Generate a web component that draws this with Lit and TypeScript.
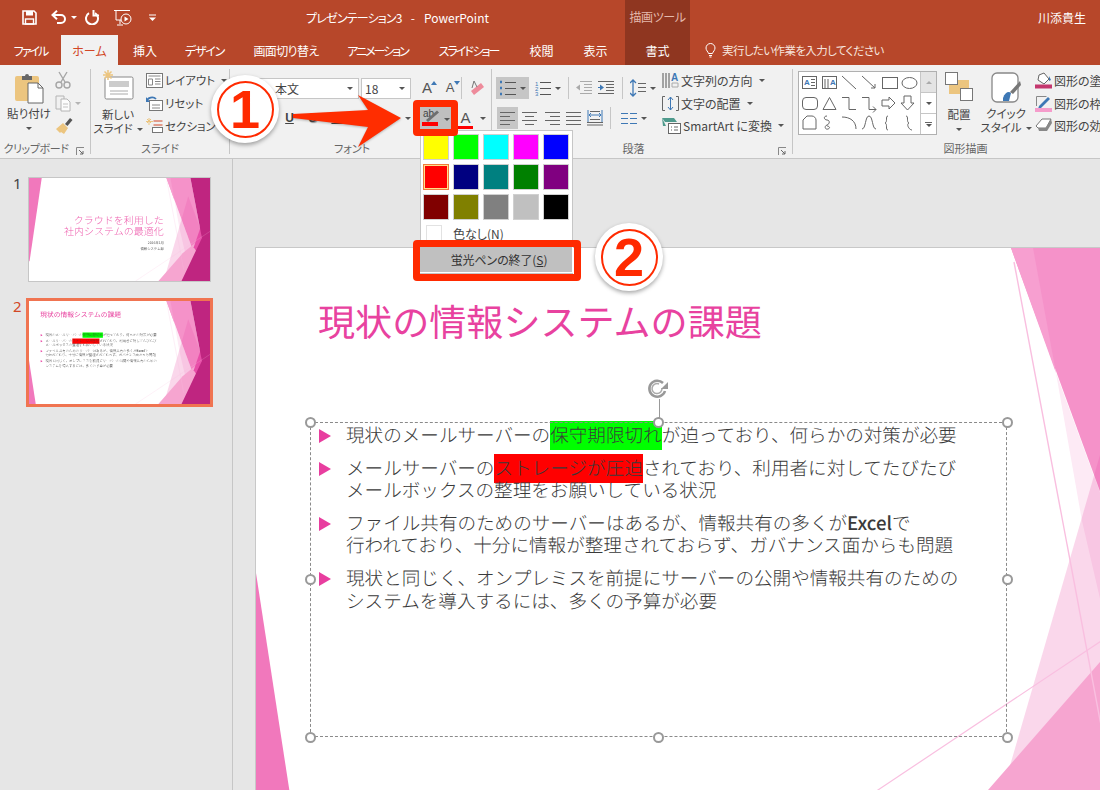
import { LitElement, html, css, svg } from "lit";
import { customElement } from "lit/decorators.js";

const tabs: [string, number, string, number][] = [
  ["ファイル", 61, "", -2],
  ["ホーム", 57, "active", 0],
  ["挿入", 54, "", 0],
  ["デザイン", 65, "", -1.2],
  ["画面切り替え", 98, "", -0.6],
  ["アニメーション", 85, "", -2],
  ["スライド ショー", 97, "", -2],
  ["校閲", 49, "", 0],
  ["表示", 59, "", 0],
  ["書式", 65, "tool", 0],
];

const swatches = [
  "#ffff00", "#00ff00", "#00ffff", "#ff00ff", "#0000ff",
  "#ff0000", "#000080", "#008080", "#008000", "#800080",
  "#800000", "#808000", "#808080", "#c0c0c0", "#000000",
];

const handles = [
  [0, 0], [348, 0], [697, 0], [0, 157], [697, 157], [0, 315], [348, 315], [697, 315],
];

const lines = (w: number, h: number, rows: [number, number, number][], color = "#666") => html`
  <svg width=${w} height=${h} viewBox="0 0 ${w} ${h}">
    ${rows.map(([a, b, y]) => svg`<line x1=${a} x2=${b} y1=${y + 0.5} y2=${y + 0.5} stroke=${color} />`)}
  </svg>`;

const art = (first: boolean) => html`
  <svg class="art" viewBox="0 0 995 566" width="995" height="566">
    ${first
      ? svg`<polygon points="0,0 70,0 3,458 0,458" fill="#f178bc" />`
      : svg`<polygon points="0,325 37,566 0,566" fill="#f178bc" />`}
    <polygon points="800,125 905,410 860,420 826,273" fill="#fdeaf5" />
    <polygon points="755,0 887,0 950,330 905,410" fill="#f592c9" />
    <polygon points="755,0 777,0 800,125" fill="#f79fd0" />
    <polygon points="875,100 740,566 950,566 950,300" fill="#ea4aa5" opacity="0.22" />
    <polygon points="844,414 711,566 995,566 995,290" fill="#f6a5d0" />
    <polygon points="950,250 905,380 950,450" fill="#e84ea8" />
    <polygon points="887,0 995,0 995,566 838,566 950,330" fill="#bf2580" />
    <line x1="758" y1="14" x2="850" y2="504" stroke="#f9bfe0" stroke-width="1.4" />
    <line x1="586" y1="566" x2="995" y2="293" stroke="#f9bfe0" stroke-width="1.2" />
  </svg>`;

const bullet = html`<svg class="bullet" width="12" height="14" viewBox="0 0 12 14"><polygon points="0,0 12,7 0,14" fill="#e83e9f" /></svg>`;

const contentSlide = () => html`
  <div class="slide">
    ${art(false)}
    <div class="s-title">現状の情報システムの課題</div>
    <div class="s-body">
      <div class="para">${bullet}<div>現状のメールサーバーの<span class="mark green">保守期限切れ</span>が迫っており、何らかの対策が必要</div></div>
      <div class="para">${bullet}<div>メールサーバーの<span class="mark red">ストレージが圧迫</span>されており、利用者に対してたびたび<br />メールボックスの整理をお願いしている状況</div></div>
      <div class="para">${bullet}<div>ファイル共有のためのサーバーはあるが、情報共有の多くが<span class="xl">Excel</span>で<br />行われており、十分に情報が整理されておらず、ガバナンス面からも問題</div></div>
      <div class="para">${bullet}<div>現状と同じく、オンプレミスを前提にサーバーの公開や情報共有のための<br />システムを導入するには、多くの予算が必要</div></div>
    </div>
  </div>`;

const titleSlide = () => html`
  <div class="slide">
    ${art(true)}
    <div class="t-block">
      <div class="t-main">クラウドを利用した<br />社内システムの最適化</div>
      <div class="t-sub">2016年1月<br />情報システム部</div>
    </div>
  </div>`;

const launcher = html`<svg class="launcher" width="9" height="9" viewBox="0 0 9 9"><path d="M0.5 8V0.5H8" fill="none" stroke="#888"/><path d="M3 3l4 4M7 4v3H4" fill="none" stroke="#666"/></svg>`;

@customElement("app-root")
export class AppRoot extends LitElement {
  static styles = css`
    :host { display: block; width: 1100px; height: 790px; overflow: hidden; font-family: "Noto Sans CJK JP", "Noto Sans", sans-serif; font-feature-settings: "palt"; }
    .root { position: relative; width: 1100px; height: 790px; overflow: hidden; background: #e6e6e6; display: flex; flex-direction: column; }
    .head { height: 65px; background: #b7472a; color: #fff; display: flex; flex-direction: column; flex: none; }
    .titlebar { height: 35px; display: flex; align-items: center; font-size: 12px; position: relative; }
    .qat { width: 306px; display: flex; align-items: center; padding-left: 22px; box-sizing: border-box; }
    .qat svg { display: block; }
    .doc-title { width: 319px; display: flex; gap: 9px; white-space: nowrap; }
    .dt-name { letter-spacing: -0.8px; }
    .tool-band { width: 65px; height: 35px; background: #8f3620; color: #e4b9ac; text-align: center; line-height: 33px; letter-spacing: -0.4px; }
    .user { margin-left: auto; margin-right: 14px; }
    .tabs { height: 30px; display: flex; font-size: 12px; }
    .tab { display: flex; align-items: center; justify-content: center; line-height: 29px; white-space: pre; }
    .tab.active { background: #f1f1f1; color: #d24726; }
    .tab.tool { background: #8f3620; }
    .tell { display: flex; align-items: center; margin-left: 15px; gap: 6px; font-size: 11.5px; color: #f6e4de; letter-spacing: -0.6px; }

    .ribbon { height: 93px; flex: none; background: #f1f1f1; border-bottom: 1px solid #c6c6c6; display: flex; color: #444; font-size: 11.5px; box-sizing: content-box; }
    .group { height: 85px; margin-top: 4px; border-right: 1px solid #c6c6c6; box-sizing: border-box; display: flex; flex-direction: column; position: relative; flex: none; }
    .group:last-child { border-right: 0; }
    .gbody { flex: 1; display: flex; min-height: 0; }
    .glabel { height: 17px; line-height: 23px; text-align: center; font-size: 11px; color: #666; white-space: nowrap; box-sizing: border-box; }
    .launcher { position: absolute; right: 5px; bottom: -2px; }
    .caret { display: inline-block; width: 0; height: 0; border: 3px solid transparent; border-top: 3.5px solid #555; border-bottom: 0; vertical-align: middle; flex: none; }
    .bigbtn { display: flex; flex-direction: column; align-items: center; line-height: 14px; text-align: center; white-space: nowrap; }
    .bigbtn svg { display: block; flex: none; }
    .smallcol { display: flex; flex-direction: column; }
    .srow { height: 23px; display: flex; align-items: center; gap: 2px; white-space: nowrap; }
    .srow .caret { margin-left: 4px; }
    .srow.gray { opacity: 0.85; }
    .lg { font-size: 12px; }

    .paste-col { width: 48px; margin-left: 5px; }
    .paste-col svg { margin: 4px 0 2px; }
    .clip-small { margin-left: 1px; padding-left: 1px; }
    .new-col { width: 50px; margin-left: 2px; }
    .new-col svg { margin-bottom: 7px; }
    .sl-small { margin-left: 3px; }

    .frows { display: flex; flex-direction: column; padding-top: 8px; gap: 8px; }
    .frow { display: flex; align-items: center; height: 22px; }
    .combo { height: 21px; background: #fff; border: 1px solid #c6c6c6; box-sizing: border-box; display: flex; align-items: center; justify-content: space-between; padding: 0 5px 0 22px; font-size: 12px; }
    .combo.font { width: 107px; margin-left: 22px; }
    .combo.size { width: 50px; margin-left: 2px; padding-left: 3px; }
    .gs { position: relative; display: flex; align-items: flex-end; justify-content: center; width: 20px; font-size: 15px; line-height: 20px; color: #555; font-family: "Liberation Sans", sans-serif; }
    .gs svg { position: absolute; right: 0; top: 3px; }
    .fsep { width: 1px; height: 22px; background: #c6c6c6; margin: 0 8px 0 1px; }
    .fb { width: 23px; text-align: center; font: bold 12px "Liberation Sans", sans-serif; color: #444; }
    .fb.i { font-style: italic; }
    .fb.u { text-decoration: underline; }
    .fb.s { text-shadow: 1px 1px 1px #999; }
    .fb.abc { width: 32px; font-size: 10px; text-decoration: underline; }
    .fb.av { width: 44px; }
    .hl { width: 32px; height: 22px; background: #bfbfbf; margin-left: 9px; flex: none; position: relative; }
    .ab { position: absolute; left: 3px; top: 1px; font: 10px/11px "Liberation Sans", sans-serif; color: #444; }
    .hl .caret { position: absolute; right: 2px; top: 11px; }
    .fcolor { position: relative; width: 15px; margin-left: 6px; font: 15px/20px "Liberation Sans", sans-serif; color: #555; text-align: center; flex: none; }
    .fcolor i { display: block; height: 3px; background: #ff0000; margin-top: -2px; }

    .prows { width: 170px; display: flex; flex-direction: column; padding-top: 8px; gap: 8px; flex: none; }
    .prow { display: flex; align-items: center; height: 22px; }
    .pbtn { display: flex; align-items: center; justify-content: center; height: 22px; flex: none; }
    .pbtn.on { background: #c6c6c6; }
    .pbtn .caret { margin-left: 4px; }
    .psep { width: 1px; height: 22px; background: #c6c6c6; flex: none; }

    .gallery { width: 137px; height: 62px; border: 1px solid #b0b0b0; background: #fff; margin: 2px 0 0 5px; display: flex; box-sizing: content-box; flex: none; }
    .gscroll { width: 15px; border-left: 1px solid #c6c6c6; display: flex; flex-direction: column; }
    .gscroll div { flex: 1; display: flex; align-items: center; justify-content: center; border-bottom: 1px solid #c6c6c6; }
    .gscroll div:first-child { background: #e4e4e4; }
    .gscroll div:last-child { border: 0; flex-direction: column; gap: 1px; }
    .gscroll b { display: block; width: 7px; height: 1px; background: #666; }
    .up { border: 3px solid transparent; border-bottom: 3.5px solid #aaa; border-top: 0; }
    .arr-col { width: 36px; margin-left: 4px; flex: none; }
    .arr-col svg { margin: 3px 0 5px; }
    .qs-col { width: 58px; flex: none; }
    .qs-col svg { margin: 3px 0 3px; }
    .shape-small { margin-left: 0; flex: none; }
    .bigbtn .caret { margin-top: 3px; }

    .work { flex: 1; display: flex; min-height: 0; }
    .pane { width: 233px; flex: none; border-right: 1px solid #c6c6c6; box-sizing: border-box; padding: 16px 0 0 13px; display: flex; flex-direction: column; gap: 14px; }
    .trow { display: flex; }
    .tnum { width: 13px; font: 15px/16px "Noto Sans", sans-serif; color: #444; flex: none; }
    .trow.cur .tnum { color: #d24726; }
    .thumb { margin: 2px; border: 1px solid #c6c6c6; }
    .trow.cur .thumb { margin: 0; border: 3px solid #f07451; }
    .tinner { width: 181px; height: 103px; overflow: hidden; background: #fff; position: relative; }
    .tinner .slide { transform: scale(0.182); transform-origin: 0 0; border: 0; }

    .stage { flex: 1; overflow: hidden; padding: 89px 0 0 23px; min-width: 0; }
    .slide-wrap { position: relative; width: 995px; height: 566px; }
    .slide { position: relative; width: 995px; height: 566px; background: #fff; box-sizing: border-box; font-feature-settings: normal; text-spacing-trim: space-all; text-rendering: geometricPrecision; color: #3a3a3a; flex: none; }
    .stage .slide { outline: 1px solid #c8c8c8; }
    .art { position: absolute; left: 0; top: 0; display: block; }
    .s-title { position: relative; padding: 45px 0 0 62px; font-size: 37.1px; line-height: 54px; color: #e8429f; font-weight: 400; white-space: nowrap; }
    .s-body { position: relative; margin-top: 77px; padding-left: 63px; display: flex; flex-direction: column; gap: 10.6px; font-size: 18.58px; line-height: 22.3px; font-weight: 300; white-space: nowrap; }
    .para { display: flex; gap: 15px; }
    .bullet { flex: none; margin-top: 5px; }
    .mark { padding: 0 0 2px; }
    .green { background: #00ff00; }
    .red { background: #ff0000; }
    .xl { font-weight: 500; }
    .t-block { position: relative; width: 741px; text-align: right; padding-top: 196px; white-space: nowrap; }
    .t-main { font-size: 55px; line-height: 62px; color: #ee5fae; font-weight: 300; }
    .t-sub { margin-top: 20px; font-size: 18.5px; line-height: 32px; color: #555; }

    .sel { position: absolute; left: 54px; top: 174px; width: 697px; height: 315px; border: 1px dashed #8a8a8a; box-sizing: border-box; }
    .handle { position: absolute; width: 11px; height: 11px; margin: -6px 0 0 -6px; border: 2px solid #999; border-radius: 50%; background: #fff; box-sizing: border-box; }
    .rot-line { position: absolute; left: 348px; top: -24px; width: 1px; height: 24px; background: #999; }
    .rot { position: absolute; left: 335px; top: -46px; }

    .menu { position: absolute; left: 420px; top: 130px; width: 153px; height: 144px; background: #fff; border: 1px solid #c6c6c6; box-sizing: border-box; padding: 3px 0 0 2px; display: flex; flex-direction: column; color: #444; font-size: 12px; }
    .grid { display: grid; grid-template-columns: repeat(5, 26px); grid-auto-rows: 26px; gap: 4px; }
    .sw { border: 1px solid #d0d0d0; box-sizing: border-box; }
    .sw.sel-c { border: 1px solid #f07a3c; box-shadow: inset 0 0 0 1px #ffe08a; }
    .none { display: flex; align-items: center; height: 16px; margin-top: 5px; padding-left: 3px; gap: 11px; }
    .nonebox { width: 16px; height: 16px; border: 1px solid #e2e2e2; box-sizing: border-box; flex: none; }
    .endbtn { position: absolute; left: -1px; top: 116px; width: 153px; height: 26px; background: #c0c0c0; border: 1px solid #fff; border-width: 0 1px 1px 0; box-sizing: border-box; display: flex; align-items: center; justify-content: center; color: #333; letter-spacing: -0.1px; padding-left: 6px; }
    u { text-underline-offset: 1px; }

    .box { position: absolute; border: 7px solid #ff2a00; border-radius: 4px; box-sizing: border-box; }
    .box.b1 { left: 413px; top: 100px; width: 45px; height: 36px; }
    .box.b2 { left: 413px; top: 240px; width: 168px; height: 41px; }
    .badge { position: absolute; width: 68px; height: 68px; border-radius: 50%; background: #fff; box-shadow: 0 2px 4px rgba(0,0,0,0.35); display: flex; align-items: center; justify-content: center; }
    .badge.n1 { left: 211px; top: 75px; }
    .badge.n2 { left: 595px; top: 223px; }
    .ring { width: 57px; height: 57px; border: 2.5px solid #ff2a00; border-radius: 50%; box-sizing: border-box; display: flex; align-items: center; justify-content: center; color: #ff2a00; font: bold 54px/52px "Liberation Sans", sans-serif; }
    .arrow { position: absolute; left: 285px; top: 88px; filter: drop-shadow(0 1px 1px rgba(0,0,0,0.25)); }
  `;

  render() {
    return html`<div class="root">
      <div class="head">
        <div class="titlebar">
          <div class="qat">
            <svg width="15" height="15" viewBox="0 0 15 15"><path d="M1 1h11l2 2v11H1z" fill="none" stroke="#fff" stroke-width="1.6"/><rect x="4" y="1" width="7" height="4.5" fill="#fff"/><rect x="3.5" y="9" width="8" height="5" fill="none" stroke="#fff" stroke-width="1.4"/></svg>
            <svg style="margin-left:14px" width="16" height="15" viewBox="0 0 16 15"><path d="M2 5h8a4 4 0 0 1 0 8H6" fill="none" stroke="#fff" stroke-width="2"/><path d="M6 0.8L1.5 5 6 9.2" fill="none" stroke="#fff" stroke-width="2"/></svg>
            <span class="caret" style="margin-left:4px;border-top-color:#fff"></span>
            <svg style="margin-left:8px" width="14" height="15" viewBox="0 0 14 15"><path d="M4 3.2a6 6 0 1 0 6 0" fill="none" stroke="#fff" stroke-width="2"/><path d="M9.5 0v5.5H15" fill="none" stroke="#fff" stroke-width="2" transform="translate(-1 0)"/></svg>
            <svg style="margin-left:14px" width="20" height="18" viewBox="0 0 20 18"><path d="M1 1.5h16M3 2v9h7M7 11v4M4 16h6" fill="none" stroke="#fff"/><circle cx="13" cy="10" r="5" fill="#b7472a" stroke="#fff"/><path d="M11.5 7.5l4 2.5-4 2.5z" fill="#fff"/></svg>
            <svg style="margin-left:16px" width="7" height="8" viewBox="0 0 7 8"><path d="M0 1h7" stroke="#fff"/><path d="M0 3.5h7L3.5 7z" fill="#fff"/></svg>
          </div>
          <div class="doc-title"><span class="dt-name">プレゼンテーション3</span><span>-</span><span>PowerPoint</span></div>
          <div class="tool-band">描画ツール</div>
          <div class="user">川添貴生</div>
        </div>
        <div class="tabs">
          ${tabs.map(([t, w, c, s]) => html`<div class="tab ${c}" style="width:${w}px;letter-spacing:${s}px">${t}</div>`)}
          <div class="tell">
            <svg width="11" height="15" viewBox="0 0 11 15"><path d="M3.5 10.5C3 8.5 1 7.5 1 5a4.5 4.5 0 0 1 9 0c0 2.500-2 3.500-2.500 5.500zM4 12.500h3M4.500 14h2" fill="none" stroke="#fff"/></svg>
            <span>実行したい作業を入力してください</span>
          </div>
        </div>
      </div>

      <div class="ribbon">
        <div class="group" style="width:91px">
          <div class="gbody">
            <div class="bigbtn paste-col">
              <svg width="30" height="31" viewBox="0 0 30 31"><rect x="1" y="3" width="24" height="25" rx="2" fill="#ecc57f"/><path d="M8 3h3a2 2 0 0 1 4 0h3v4H8z" fill="#666"/><path d="M14 10h10l5 5v15H14z" fill="#fff" stroke="#666"/><path d="M24 10v5h5" fill="none" stroke="#666"/></svg>
              <div>貼り付け</div>
              <span class="caret" style="margin-top:7px"></span>
            </div>
            <div class="smallcol clip-small">
              <div class="srow gray"><svg width="16" height="20" viewBox="0 0 16 20"><path d="M4 2l6 10M12 2l-6 10" stroke="#999" fill="none" stroke-width="1.400"/><circle cx="4" cy="15" r="3" fill="none" stroke="#999" stroke-width="1.400"/><circle cx="12" cy="15" r="3" fill="none" stroke="#999" stroke-width="1.400"/></svg></div>
              <div class="srow gray"><svg width="26" height="18" viewBox="0 0 26 18"><path d="M1 2h8v13H1z" fill="#f1f1f1" stroke="#aaa"/><path d="M6 5h6l3 3v9H6z" fill="#fff" stroke="#aaa"/><path d="M8 10h5M8 13h5" stroke="#bbb"/><path d="M20 8h6l-3 3z" fill="#aaa"/></svg></div>
              <div class="srow"><svg width="18" height="18" viewBox="0 0 18 18"><path d="M10 7l5-6 2.500 2-5 6z" fill="#555"/><path d="M1 12l7-6 5 5-4 6-3-2-1 1z" fill="#ecc57f"/></svg></div>
            </div>
          </div>
          <div class="glabel" style="padding-right:18px;letter-spacing:-0.4px">クリップボード</div>
          ${launcher}
        </div>

        <div class="group" style="width:139px">
          <div class="gbody">
            <div class="bigbtn new-col">
              <svg width="32" height="31" viewBox="0 0 32 31"><rect x="3" y="8" width="28" height="22" rx="1.500" fill="#fff" stroke="#888"/><rect x="7" y="12" width="20" height="6" fill="#ccc"/><path d="M8 22h18M8 25h18" stroke="#aaa"/><path d="M6 1v10M1 6h10M2.500 2.500l7 7M9.500 2.500l-7 7" stroke="#ecc57f" stroke-width="1.500"/></svg>
              <div>新しい<br />スライド<span class="caret" style="margin:0 0 0 4px"></span></div>
            </div>
            <div class="smallcol sl-small">
              <div class="srow"><svg width="17" height="15" viewBox="0 0 17 15"><rect x="0.500" y="0.500" width="16" height="14" fill="#fff" stroke="#777"/><path d="M2.500 3h12M2.500 6h4v6h-4zM9 6h5.500M9 8.500h5.500M9 11h5.500" fill="none" stroke="#888"/></svg><span>レイアウト</span><span class="caret"></span></div>
              <div class="srow"><svg width="17" height="15" viewBox="0 0 17 15"><rect x="3.500" y="4.500" width="13" height="10" fill="#fff" stroke="#777"/><path d="M6 9h8M6 12h8" stroke="#888"/><path d="M1 5a5 4 0 0 1 9-2" fill="none" stroke="#3e78b5" stroke-width="1.800"/><path d="M0 1v5h4z" fill="#3e78b5"/></svg><span>リセット</span></div>
              <div class="srow"><svg width="17" height="15" viewBox="0 0 17 15"><path d="M3 0v7M0 3.500h7M1 1l4 4M5 1L1 5" stroke="#ecc57f"/><path d="M7.500 3h9M7.500 7h9" stroke="#d24726"/><rect x="6.500" y="9.500" width="10" height="5" fill="#fff" stroke="#777"/></svg><span>セクション</span></div>
            </div>
          </div>
          <div class="glabel">スライド</div>
        </div>

        <div class="group" style="width:262px">
          <div class="gbody">
            <div class="frows">
              <div class="frow">
                <div class="combo font"><span>本文</span><span class="caret"></span></div>
                <div class="combo size"><span>18</span><span class="caret"></span></div>
                <div class="gs" style="margin-left:6px">A<svg width="6" height="4" viewBox="0 0 6 4"><path d="M0 4l3-4 3 4z" fill="#3e78b5"/></svg></div>
                <div class="gs" style="margin-left:3px;font-size:13px">A<svg width="6" height="4" viewBox="0 0 6 4"><path d="M0 0l3 4 3-4z" fill="#3e78b5"/></svg></div>
                <div class="fsep"></div>
                <svg width="16" height="18" viewBox="0 0 16 18"><path d="M4 16l10-8-3-4L1 12z" fill="#ee8b9b"/><path d="M2 9L4 2l3 6" fill="none" stroke="#777"/></svg>
              </div>
              <div class="frow" style="padding-left:2px">
                <div class="fb">B</div><div class="fb i">I</div><div class="fb u">U</div><div class="fb s">S</div><div class="fb abc">abc</div><div class="fb av">AV</div>
                <span class="caret" style="margin-left:5px"></span>
                <div class="hl">
                  <span class="ab">ab</span>
                  <svg width="24" height="20" viewBox="0 0 24 20" style="position:absolute;left:0;top:0"><path d="M6 13L17 3.500l2 2L8 15z" fill="#6f6f6f"/><rect x="2" y="15" width="16" height="4" fill="#ff0000"/></svg>
                  <span class="caret"></span>
                </div>
                <div class="fcolor">A<i></i></div>
                <span class="caret" style="margin-left:7px"></span>
              </div>
            </div>
          </div>
          <div class="glabel" style="padding-right:17px">フォント</div>
          ${launcher}
        </div>

        <div class="group" style="width:301px">
          <div class="gbody">
            <div class="prows">
              <div class="prow" style="padding-left:4px">
                <div class="pbtn on" style="width:33px">
                  <svg width="17" height="16" viewBox="0 0 17 16"><path d="M1 2h2M1 8h2M1 14h2" stroke="#3e78b5" stroke-width="2.400"/><path d="M6 2.500h11M6 8.500h11M6 14.500h11" stroke="#555"/></svg><span class="caret"></span>
                </div>
                <div class="pbtn" style="width:29px;margin-left:4px">
                  <svg width="16" height="16" viewBox="0 0 16 16"><text x="0" y="6" font-size="6" fill="#3e78b5" font-family="Liberation Sans">1</text><text x="0" y="11" font-size="6" fill="#3e78b5" font-family="Liberation Sans">2</text><text x="0" y="16" font-size="6" fill="#3e78b5" font-family="Liberation Sans">3</text><path d="M5 2.500h11M5 8.500h11M5 14.500h11" stroke="#555"/></svg><span class="caret"></span>
                </div>
                <div class="psep" style="margin-left:6px"></div>
                <div class="pbtn" style="width:16px;margin-left:7px"><svg width="16" height="14" viewBox="0 0 16 14"><path d="M4 .5h12M8 3.500h8M8 6.500h8M8 9.500h8M4 12.500h12" stroke="#aaa"/><path d="M0 6.500l4-3v6z" fill="#aaa"/></svg></div>
                <div class="pbtn" style="width:16px;margin-left:6px"><svg width="16" height="14" viewBox="0 0 16 14"><path d="M0 .5h16M8 3.500h8M8 6.500h8M8 9.500h8M0 12.500h16" stroke="#666"/><path d="M6 6.500l-4-3v6z" fill="#3e78b5"/><path d="M0 6.500h3" stroke="#3e78b5"/></svg></div>
                <div class="psep" style="margin-left:8px"></div>
                <div class="pbtn" style="width:26px;margin-left:7px"><svg width="16" height="18" viewBox="0 0 16 18"><path d="M3 1v16M0 4l3-3 3 3M0 14l3 3 3-3" fill="none" stroke="#3e78b5" stroke-width="1.300"/><path d="M8 4.500h8M8 8.500h8M8 12.500h8" stroke="#666"/></svg><span class="caret"></span></div>
              </div>
              <div class="prow" style="padding-left:5px">
                <div class="pbtn on" style="width:21px">${lines(15, 13, [[0, 15, 0], [0, 10, 4], [0, 15, 8], [0, 10, 12]])}</div>
                <div class="pbtn" style="width:15px;margin-left:4px">${lines(15, 13, [[0, 15, 0], [3, 12, 4], [0, 15, 8], [3, 12, 12]])}</div>
                <div class="pbtn" style="width:15px;margin-left:8px">${lines(15, 13, [[0, 15, 0], [5, 15, 4], [0, 15, 8], [5, 15, 12]])}</div>
                <div class="pbtn" style="width:15px;margin-left:6px">${lines(15, 13, [[0, 15, 0], [0, 15, 4], [0, 15, 8], [0, 15, 12]])}</div>
                <div class="pbtn" style="width:16px;margin-left:6px"><svg width="16" height="16" viewBox="0 0 16 16"><path d="M1 0v13M15 0v13M2 5h12M4 3L2 5l2 2M12 3l2 2-2 2" fill="none" stroke="#3e78b5"/><path d="M3 1.500h10M3 9.500h10M0 12.500h16M0 15h16" stroke="#666"/></svg></div>
                <div class="psep" style="margin-left:7px"></div>
                <div class="pbtn" style="width:30px;margin-left:8px"><svg width="16" height="11" viewBox="0 0 16 11"><path d="M0 .5h7M9 .5h7M0 5.500h7M9 5.500h7M0 10.500h7M9 10.500h7" stroke="#3e78b5"/></svg><span class="caret"></span></div>
              </div>
            </div>
            <div class="smallcol">
              <div class="srow"><svg width="17" height="17" viewBox="0 0 17 17"><path d="M1 1v15M4 1v15M7 1v15" stroke="#555"/><text x="9" y="9" font-size="10" fill="#3e78b5" font-family="Liberation Sans" font-weight="bold">A</text><path d="M10 11h6v4h-6z" fill="none" stroke="#aaa"/></svg><span class="lg">文字列の方向</span><span class="caret"></span></div>
              <div class="srow"><svg width="17" height="17" viewBox="0 0 17 17"><path d="M3 1.500H.5v14H3M14 1.500h2.500v14H14" fill="none" stroke="#666"/><path d="M8.500 2v13M6 5l2.500-3L11 5M6 12l2.500 3 2.500-3" fill="none" stroke="#3e78b5"/></svg><span class="lg">文字の配置</span><span class="caret"></span></div>
              <div class="srow"><svg width="19" height="16" viewBox="0 0 19 16"><path d="M0 0h12l3 4H3z" fill="#4e9a8c"/><path d="M0 0l4 8H1z" fill="#4e9a8c"/><rect x="6.500" y="5.500" width="12" height="10" fill="#fff" stroke="#666"/><path d="M9 9h1M12 9h4M9 12h1M12 12h4" stroke="#666"/></svg><span class="lg">SmartArt に変換</span><span class="caret"></span></div>
            </div>
          </div>
          <div class="glabel" style="padding-right:17px">段落</div>
          ${launcher}
        </div>

        <div class="group" style="width:307px">
          <div class="gbody">
            <div class="gallery">
              <svg width="121" height="62" viewBox="0 0 121 62">
                <g fill="none" stroke="#666">
                  <rect x="3.500" y="4.500" width="14" height="12"/><rect x="23.500" y="4.500" width="14" height="12"/>
                  <path d="M12 7.500h4M12 10.500h4M12 13.500h4M26 7v9M29 7v9"/>
                  <path d="M43 4l14 13M63 4l13 12M76 16h-4M76 16v-4"/>
                  <rect x="83.500" y="5.500" width="15" height="11"/><ellipse cx="110.500" cy="11" rx="7.500" ry="5.500"/>
                  <rect x="3.500" y="25.500" width="15" height="12" rx="3.500"/>
                  <path d="M24 37.500l6.500-12 6.500 12zM43 25.500h7v12h7M63 25.500h7v12h7M74 34.500l3 3-3 3"/>
                  <path d="M83 28h7v-3l6 6-6 6v-3h-7zM105 24h7v7h3l-6.500 7L102 31h3z"/>
                  <path d="M4 48l4-4h5c2 0 4 2 4 4v9H4z"/>
                  <path d="M28 44c-4 0-3 4 0 4s3 4 0 5-2 5 1 4 1-3-1-3"/>
                  <path d="M43 45c8 0 14 4 14 12M63 57c4 0 3-13 7-13s3 13 7 13"/>
                  <path d="M89 44c-3 0 0 6-3 7 3 1 0 7 3 7M107 44c3 0 0 6 3 7-3 1 0 7 3 7"/>
                </g>
                <g fill="#3e78b5" font-family="Liberation Sans" font-weight="bold" font-size="8"><text x="5" y="13">A</text><text x="31" y="13">A</text></g>
              </svg>
              <div class="gscroll">
                <div><span class="up"></span></div>
                <div><span class="caret"></span></div>
                <div><b></b><span class="caret"></span></div>
              </div>
            </div>
            <div class="bigbtn arr-col">
              <svg width="28" height="30" viewBox="0 0 28 30"><rect x="4" y="8" width="20" height="14" fill="#ecc57f"/><rect x="0.500" y="0.500" width="12" height="12" fill="#fff" stroke="#777"/><rect x="15.500" y="16.500" width="12" height="12" fill="#fff" stroke="#777"/></svg>
              <div>配置</div>
              <span class="caret" style="margin-top:7px"></span>
            </div>
            <div class="bigbtn qs-col">
              <svg width="30" height="31" viewBox="0 0 30 31"><rect x="1" y="1" width="26" height="29" rx="5" fill="#fff" stroke="#888" stroke-width="1.300"/><path d="M12 26c2-6 6-7 8-5l-2 8h-6z" fill="#3e78b5"/><path d="M19 20l10-11 1 4-8 9z" fill="#777"/></svg>
              <div>クイック<br />スタイル<span class="caret" style="margin:0 0 0 4px"></span></div>
            </div>
            <div class="smallcol shape-small">
              <div class="srow"><svg width="17" height="17" viewBox="0 0 17 17"><path d="M4 3l5-2 5 6-5 5-6-4z" fill="#fff" stroke="#666"/><path d="M14 4l2 4-2 1z" fill="#3e78b5"/><rect x="0" y="12.500" width="17" height="4" fill="#c4376e"/></svg><span class="lg">図形の塗りつぶし</span></div>
              <div class="srow"><svg width="17" height="17" viewBox="0 0 17 17"><path d="M1.500 11V1.500h10" fill="none" stroke="#888"/><path d="M4 11l9-9 2 2-9 9-3 1z" fill="#3e78b5"/><rect x="0" y="13" width="17" height="4" fill="#f59ccb"/></svg><span class="lg">図形の枠線</span></div>
              <div class="srow"><svg width="17" height="15" viewBox="0 0 17 15"><path d="M1 8l6-7h9l-5 9H3z" fill="#fff" stroke="#777"/><path d="M3 10h8l5-9 1 4-5 8H4z" fill="#888"/></svg><span class="lg">図形の効果</span></div>
            </div>
          </div>
          <div class="glabel" style="padding-left:38px">図形描画</div>
        </div>
      </div>

      <div class="work">
        <div class="pane">
          <div class="trow"><div class="tnum">1</div><div class="thumb"><div class="tinner">${titleSlide()}</div></div></div>
          <div class="trow cur"><div class="tnum">2</div><div class="thumb"><div class="tinner">${contentSlide()}</div></div></div>
        </div>
        <div class="stage">
          <div class="slide-wrap">
            ${contentSlide()}
            <div class="sel">
              <div class="rot-line"></div>
              <svg class="rot" width="24" height="24" viewBox="0 0 24 24"><path d="M17 6a8 8 0 1 0 2 8" fill="none" stroke="#999" stroke-width="2.500"/><path d="M13 7a5 5 0 1 0 3 4" fill="none" stroke="#aaa" stroke-width="1.500"/><path d="M22 5v7h-7z" fill="#999"/></svg>
              ${handles.map(([x, y]) => html`<div class="handle" style="left:${x}px;top:${y}px"></div>`)}
            </div>
          </div>
        </div>
      </div>

      <div class="menu">
        <div class="grid">
          ${swatches.map((c, i) => html`<div class="sw ${i === 5 ? "sel-c" : ""}" style="background:${c}"></div>`)}
        </div>
        <div class="none"><div class="nonebox"></div><span>色なし(<u>N</u>)</span></div>
        <div class="endbtn"><span>蛍光ペンの終了(<u>S</u>)</span></div>
      </div>
      <div class="box b1"></div>
      <div class="box b2"></div>
      <svg class="arrow" width="125" height="65" viewBox="0 0 125 65"><polygon points="8,26 83,22 73,7 116,30 73,59 83,39 8,30" fill="#ff2d00"/></svg>
      <div class="badge n1"><div class="ring">1</div></div>
      <div class="badge n2"><div class="ring">2</div></div>
    </div>`;
  }
}
